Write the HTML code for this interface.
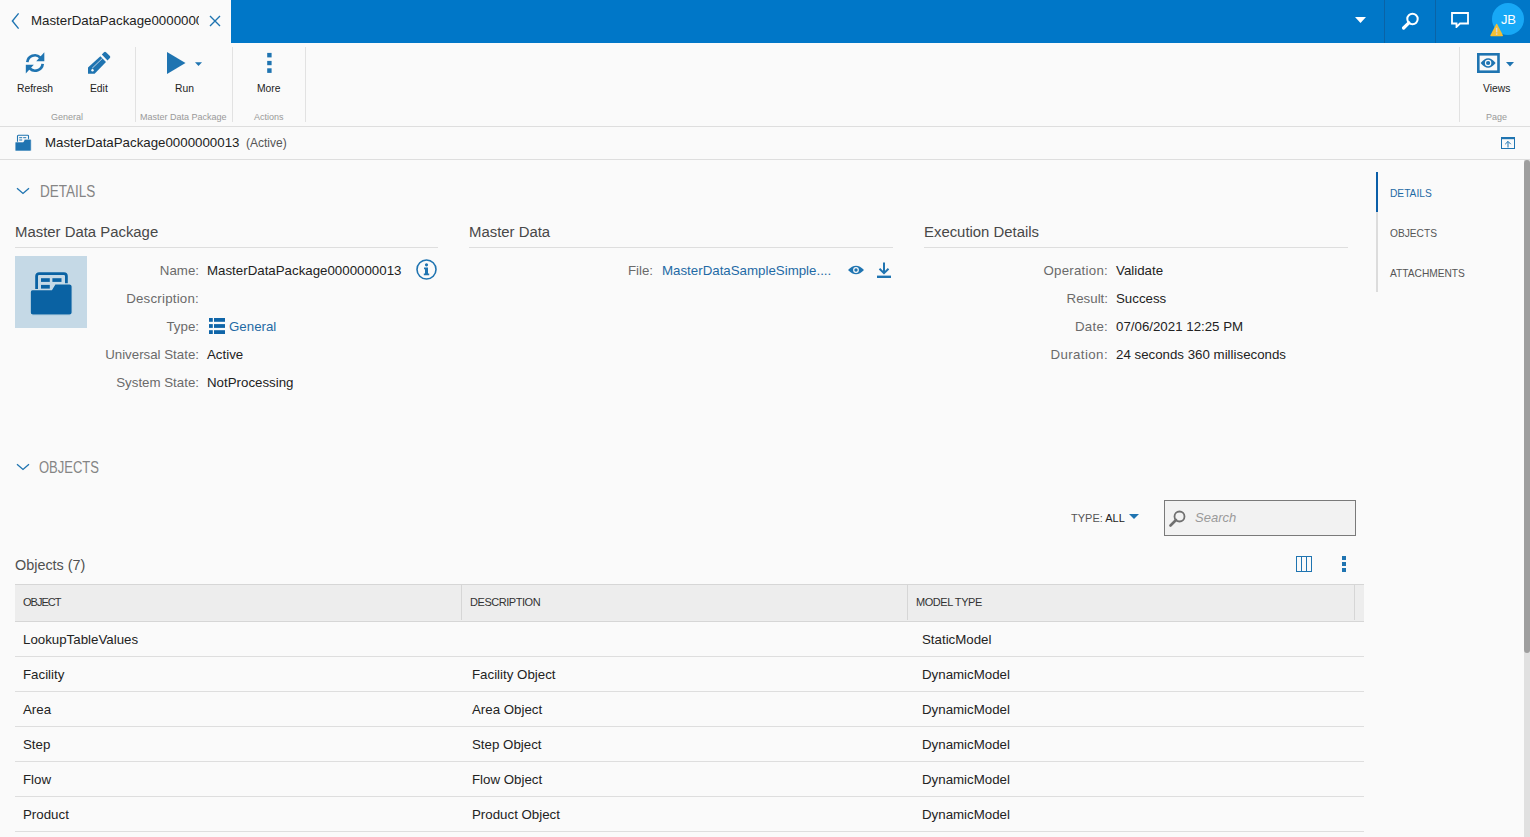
<!DOCTYPE html>
<html><head><meta charset="utf-8">
<style>
*{margin:0;padding:0;box-sizing:border-box}
html,body{width:1530px;height:837px;overflow:hidden;background:#fafafa;font-family:"Liberation Sans",sans-serif;color:#222}
.a{position:absolute;white-space:nowrap}
.topbar{position:absolute;left:231px;top:0;width:1299px;height:43px;background:#0077c8}
.tsep{position:absolute;top:0;width:1px;height:43px;background:#0a63a6}
.rsep{position:absolute;top:47px;width:1px;height:75px;background:#e2e2e2}
.rlab{font-size:10.3px;color:#222;margin-top:1.5px}
.glab{font-size:9px;color:#999;margin-top:1px}
.hline{position:absolute;height:1px;background:#dedede}
.lbl{font-size:13.3px;color:#6a6a6a;text-align:right;margin-top:1px}
.val{font-size:13.3px;color:#222;margin-top:1px}
.sect{font-size:14.9px;color:#484848;margin-top:1.2px}
.big{font-size:15.6px;color:#858585;transform-origin:0 0}
.nav{font-size:10.2px;color:#555;margin-top:1px}
.th{font-size:11px;color:#333;letter-spacing:-0.45px}
.td{font-size:13.3px;color:#222;margin-top:1px}
</style></head><body>

<!-- top bar -->
<div class="topbar"></div>
<div class="tsep" style="left:1384px"></div>
<div class="tsep" style="left:1435px"></div>

<!-- tab -->
<svg class="a" style="left:10px;top:12px" width="12" height="18" viewBox="0 0 12 18"><path d="M8.6 1.4 L2.4 9 L8.6 16.6" fill="none" stroke="#1f74b1" stroke-width="1.4"/></svg>
<div class="a" style="left:31px;top:13px;font-size:13.3px;color:#222;width:168px;overflow:hidden">MasterDataPackage0000000013</div>
<svg class="a" style="left:208.5px;top:15px" width="12" height="12" viewBox="0 0 12 12"><path d="M1 1 L11 11 M11 1 L1 11" fill="none" stroke="#1f74b1" stroke-width="1.4"/></svg>


<!-- ribbon -->
<svg class="a" style="left:25px;top:52px" width="20" height="22" viewBox="0 0 20 22"><g fill="none" stroke="#1f74b1" stroke-width="2.7"><path d="M2.3 10.2 A7.7 7.7 0 0 1 15.2 5.4"/><path d="M17.7 11.8 A7.7 7.7 0 0 1 4.8 16.6"/></g><g fill="#1f74b1"><path d="M19.3 0.2 V9.2 H11.2 Z"/><path d="M0.8 12.8 H8.8 L0.8 21.6 Z"/></g></svg>
<svg class="a" style="left:88px;top:51px" width="23" height="23" viewBox="0 0 23 23"><path fill="#1f74b1" d="M0 16.6 L12.4 5.2 L18 10.9 L6.6 22.8 L0 22.8 Z"/><path fill="#1f74b1" d="M13.8 3.6 L16 1.3 Q17 0.3 18 1.3 L21.9 5.1 Q22.8 6 21.9 7 L19.5 9.4 Z"/><path d="M4.2 17.2 L14.6 7.2" stroke="#e8eef3" stroke-width="0.8"/><circle cx="4.5" cy="19.3" r="1.2" fill="#fafafa"/></svg>
<div class="a rlab" style="left:17px;top:81px">Refresh</div>
<div class="a rlab" style="left:90px;top:81px">Edit</div>
<div class="a glab" style="left:51px;top:111px">General</div>
<div class="rsep" style="left:135px"></div>
<svg class="a" style="left:167px;top:52px" width="19" height="22" viewBox="0 0 19 22"><path fill="#1f74b1" d="M0 0 L18.5 11 L0 22 Z"/></svg>
<svg class="a" style="left:195px;top:62px" width="7" height="5" viewBox="0 0 7 5"><path fill="#1f74b1" d="M0 0.2 H7 L3.5 4 Z"/></svg>
<div class="a rlab" style="left:175px;top:81px">Run</div>
<div class="a glab" style="left:140px;top:111px">Master Data Package</div>
<div class="rsep" style="left:232px"></div>
<svg class="a" style="left:267px;top:52px" width="5" height="22" viewBox="0 0 5 22"><rect x="0.2" y="0.9" width="4.4" height="4.5" fill="#1f74b1"/><rect x="0.2" y="8.9" width="4.4" height="4.3" fill="#1f74b1"/><rect x="0.2" y="16.3" width="4.4" height="4.6" fill="#1f74b1"/></svg>
<div class="a rlab" style="left:257px;top:81px">More</div>
<div class="a glab" style="left:254px;top:111px">Actions</div>
<div class="rsep" style="left:305px"></div>
<div class="rsep" style="left:1459px"></div>
<svg class="a" style="left:1477px;top:53px" width="23" height="20" viewBox="0 0 23 20"><rect x="1.3" y="1.3" width="20.2" height="17.4" fill="none" stroke="#1f74b1" stroke-width="2.6"/><path fill="#1f74b1" d="M3.6 10 Q11.1 0.6 18.6 10 Q11.1 19.4 3.6 10 Z"/><circle cx="11.1" cy="10" r="3.2" fill="#fafafa"/><circle cx="11.1" cy="10" r="2.1" fill="#1f74b1"/></svg>
<svg class="a" style="left:1506px;top:62px" width="8" height="5" viewBox="0 0 8 5"><path fill="#1f74b1" d="M0 0 H8 L4 4.5 Z"/></svg>
<div class="a rlab" style="left:1483px;top:81px">Views</div>
<div class="a glab" style="left:1486px;top:111px">Page</div>
<div class="hline" style="left:0;top:126px;width:1530px"></div>


<!-- title row -->
<svg class="a" style="left:15px;top:134px" width="17" height="18" viewBox="0 0 17 18"><rect x="2.5" y="1.3" width="11" height="8" rx="0.8" fill="none" stroke="#1f74b1" stroke-width="1.1"/><g fill="#1f74b1"><rect x="4.2" y="3.2" width="3" height="1"/><rect x="8.2" y="3.2" width="3" height="1"/><rect x="4.2" y="5.5" width="3" height="1"/></g><path fill="#1f74b1" stroke="#fafafa" stroke-width="0.6" d="M0.8 8 H8.3 L9.6 5.3 H15.3 Q16.2 5.3 16.2 6.2 V16.2 Q16.2 17 15.3 17 H0.9 Q0.1 17 0.1 16.2 V8.9 Q0.1 8 0.8 8 Z"/></svg>
<div class="a" style="left:45px;top:135px;font-size:13.3px;color:#222">MasterDataPackage0000000013</div>
<div class="a" style="left:246px;top:136px;font-size:12px;color:#555">(Active)</div>
<svg class="a" style="left:1501px;top:137px" width="14" height="12" viewBox="0 0 14 12"><rect x="0.5" y="0.5" width="13" height="11" fill="none" stroke="#1f74b1" stroke-width="1"/><rect x="0" y="0" width="14" height="2.2" fill="#1f74b1"/><path d="M7 10.5 V4.5 M4.2 7.2 L7 4.4 L9.8 7.2" fill="none" stroke="#1f74b1" stroke-width="1"/></svg>
<div class="hline" style="left:0;top:159px;width:1530px"></div>

<!-- scrollbar -->
<div class="a" style="left:1524px;top:160px;width:6px;height:677px;background:#e0e0e0"></div>
<div class="a" style="left:1524px;top:160px;width:6px;height:493px;background:#9e9e9e;border-radius:3px"></div>

<!-- details header -->
<svg class="a" style="left:16px;top:187px" width="14" height="8" viewBox="0 0 14 8"><path d="M1 1.2 L7 6.4 L13 1.2" fill="none" stroke="#1f74b1" stroke-width="1.35"/></svg>
<div class="a big" style="left:40px;top:183px;transform:scaleX(0.867)">DETAILS</div>

<!-- col1 -->
<div class="a sect" style="left:15px;top:223px">Master Data Package</div>
<div class="hline" style="left:15px;top:247px;width:423px"></div>
<div class="a" style="left:15px;top:256px;width:72px;height:72px;background:#c5d9e6"></div>
<svg class="a" style="left:30px;top:271.5px" width="43" height="44" viewBox="0 0 43 44"><rect x="6.6" y="1.6" width="29.8" height="20" rx="2.5" fill="none" stroke="#0a62a3" stroke-width="2.8"/><g fill="#0a62a3"><rect x="11" y="6.2" width="8.8" height="3.7"/><rect x="22.4" y="6.2" width="9.1" height="3.7"/><rect x="11" y="12.9" width="8.8" height="3.7"/></g><path fill="#0a62a3" stroke="#c8dbe6" stroke-width="1.2" d="M2.5 17.6 H21.6 L25 11.9 H39.5 Q42.2 11.9 42.2 14.6 V40.5 Q42.2 43.2 39.5 43.2 H2.9 Q0.2 43.2 0.2 40.5 V20.2 Q0.2 17.6 2.5 17.6 Z"/></svg>
<div class="a lbl" style="left:15px;top:262px;width:184px">Name:</div>
<div class="a val" style="left:207px;top:262px">MasterDataPackage0000000013</div>
<svg class="a" style="left:416px;top:259px" width="21" height="21" viewBox="0 0 21 21"><circle cx="10.5" cy="10.5" r="9.5" fill="none" stroke="#1f74b1" stroke-width="1.6"/><circle cx="10.5" cy="5.8" r="1.6" fill="#1f74b1"/><path fill="#1f74b1" d="M8 8.5 H12 V14.5 H13.2 V16.2 H7.8 V14.5 H9 V10.2 H8 Z"/></svg>
<div class="a lbl" style="left:15px;top:290px;width:184px;letter-spacing:0.22px">Description:</div>
<div class="a lbl" style="left:15px;top:318px;width:184px">Type:</div>
<svg class="a" style="left:209px;top:318px" width="16" height="16" viewBox="0 0 16 16"><g fill="#0f65a8"><rect x="0" y="0" width="3.8" height="3.8"/><rect x="5" y="0" width="11" height="3.8"/><rect x="0" y="6.1" width="3.8" height="3.8"/><rect x="5" y="6.1" width="11" height="3.8"/><rect x="0" y="12.2" width="3.8" height="3.8"/><rect x="5" y="12.2" width="11" height="3.8"/></g></svg>
<div class="a val" style="left:229px;top:318px;color:#1f6aa5">General</div>
<div class="a lbl" style="left:15px;top:346px;width:184px">Universal State:</div>
<div class="a val" style="left:207px;top:346px">Active</div>
<div class="a lbl" style="left:15px;top:374px;width:184px">System State:</div>
<div class="a val" style="left:207px;top:374px">NotProcessing</div>

<!-- col2 -->
<div class="a sect" style="left:469px;top:223px">Master Data</div>
<div class="hline" style="left:469px;top:247px;width:424px"></div>
<div class="a lbl" style="left:469px;top:262px;width:184px">File:</div>
<div class="a val" style="left:662px;top:262px;color:#1f6aa5">MasterDataSampleSimple....</div>
<svg class="a" style="left:848px;top:265px" width="16" height="10" viewBox="0 0 16 10"><path fill="#1f74b1" d="M0 5 Q8 -3.5 16 5 Q8 13.5 0 5 Z"/><circle cx="8" cy="5" r="2.9" fill="#fafafa"/><circle cx="8" cy="5" r="1.7" fill="#1f74b1"/></svg>
<svg class="a" style="left:876px;top:262px" width="16" height="16" viewBox="0 0 16 16"><path d="M8 0.5 V11 M3.5 6.8 L8 11.2 L12.5 6.8" fill="none" stroke="#1f74b1" stroke-width="2"/><rect x="1" y="13.6" width="14" height="2.4" fill="#1f74b1"/></svg>

<!-- col3 -->
<div class="a sect" style="left:924px;top:223px">Execution Details</div>
<div class="hline" style="left:924px;top:247px;width:424px"></div>
<div class="a lbl" style="left:924px;top:262px;width:184px;letter-spacing:0.25px">Operation:</div>
<div class="a val" style="left:1116px;top:262px">Validate</div>
<div class="a lbl" style="left:924px;top:290px;width:184px">Result:</div>
<div class="a val" style="left:1116px;top:290px">Success</div>
<div class="a lbl" style="left:924px;top:318px;width:184px;letter-spacing:0.25px">Date:</div>
<div class="a val" style="left:1116px;top:318px">07/06/2021 12:25 PM</div>
<div class="a lbl" style="left:924px;top:346px;width:184px;letter-spacing:0.4px">Duration:</div>
<div class="a val" style="left:1116px;top:346px">24 seconds 360 milliseconds</div>

<!-- right nav -->
<div class="a" style="left:1376px;top:172px;width:2px;height:120px;background:#dcdcdc"></div>
<div class="a" style="left:1376px;top:172px;width:2px;height:40px;background:#0a5ea8"></div>
<div class="a nav" style="left:1390px;top:187px;color:#1f6aa5">DETAILS</div>
<div class="a nav" style="left:1390px;top:227px">OBJECTS</div>
<div class="a nav" style="left:1390px;top:267px">ATTACHMENTS</div>

<!-- objects header -->
<svg class="a" style="left:16px;top:463px" width="14" height="8" viewBox="0 0 14 8"><path d="M1 1.2 L7 6.4 L13 1.2" fill="none" stroke="#1f74b1" stroke-width="1.35"/></svg>
<div class="a big" style="left:39px;top:458.5px;transform:scaleX(0.834)">OBJECTS</div>

<div class="a" style="left:1071px;top:512px;font-size:11px;color:#555">TYPE: <span style="color:#222">ALL</span></div>
<svg class="a" style="left:1129px;top:514px" width="10" height="5" viewBox="0 0 10 5"><path fill="#1f74b1" d="M0 0 H10 L5 5 Z"/></svg>
<div class="a" style="left:1164px;top:500px;width:192px;height:36px;background:#f2f2f2;border:1px solid #7a7a7a"></div>
<svg class="a" style="left:1169px;top:510px" width="17" height="17" viewBox="0 0 17 17"><circle cx="10.5" cy="6.5" r="5" fill="none" stroke="#707070" stroke-width="1.8"/><path d="M7 10 L1.5 15.5" stroke="#707070" stroke-width="2.6" stroke-linecap="round"/></svg>
<div class="a" style="left:1195px;top:510px;font-size:13px;color:#9a9a9a;font-style:italic">Search</div>

<div class="a" style="left:15px;top:557px;font-size:14.4px;color:#505050">Objects (7)</div>
<svg class="a" style="left:1296px;top:556px" width="16" height="16" viewBox="0 0 16 16"><rect x="0.5" y="0.5" width="15" height="15" fill="none" stroke="#1f74b1" stroke-width="1"/><path d="M5.5 0.5 V15.5 M10.5 0.5 V15.5" stroke="#1f74b1" stroke-width="1"/></svg>
<svg class="a" style="left:1342px;top:556px" width="4" height="16" viewBox="0 0 4 16"><rect x="0" y="0" width="4" height="4" fill="#1f74b1"/><rect x="0" y="6" width="4" height="4" fill="#1f74b1"/><rect x="0" y="12" width="4" height="4" fill="#1f74b1"/></svg>

<!-- table -->
<div class="a" style="left:15px;top:584px;width:1349px;height:38px;background:#ededed;border-top:1px solid #d6d6d6;border-bottom:1px solid #d6d6d6"></div>
<div class="a" style="left:461px;top:585px;width:1px;height:35px;background:#d6d6d6"></div>
<div class="a" style="left:907px;top:585px;width:1px;height:35px;background:#d6d6d6"></div>
<div class="a" style="left:1354px;top:585px;width:1px;height:35px;background:#d6d6d6"></div>
<div class="a th" style="left:23px;top:596px;letter-spacing:-1px">OBJECT</div>
<div class="a th" style="left:470px;top:596px">DESCRIPTION</div>
<div class="a th" style="left:916px;top:596px">MODEL TYPE</div>
<div class="a td" style="left:23px;top:631px">LookupTableValues</div><div class="a td" style="left:472px;top:631px"></div><div class="a td" style="left:922px;top:631px">StaticModel</div>
<div class="hline" style="left:15px;top:656px;width:1349px"></div>
<div class="a td" style="left:23px;top:666px">Facility</div><div class="a td" style="left:472px;top:666px">Facility Object</div><div class="a td" style="left:922px;top:666px">DynamicModel</div>
<div class="hline" style="left:15px;top:691px;width:1349px"></div>
<div class="a td" style="left:23px;top:701px">Area</div><div class="a td" style="left:472px;top:701px">Area Object</div><div class="a td" style="left:922px;top:701px">DynamicModel</div>
<div class="hline" style="left:15px;top:726px;width:1349px"></div>
<div class="a td" style="left:23px;top:736px">Step</div><div class="a td" style="left:472px;top:736px">Step Object</div><div class="a td" style="left:922px;top:736px">DynamicModel</div>
<div class="hline" style="left:15px;top:761px;width:1349px"></div>
<div class="a td" style="left:23px;top:771px">Flow</div><div class="a td" style="left:472px;top:771px">Flow Object</div><div class="a td" style="left:922px;top:771px">DynamicModel</div>
<div class="hline" style="left:15px;top:796px;width:1349px"></div>
<div class="a td" style="left:23px;top:806px">Product</div><div class="a td" style="left:472px;top:806px">Product Object</div><div class="a td" style="left:922px;top:806px">DynamicModel</div>
<div class="hline" style="left:15px;top:831px;width:1349px"></div>

<svg class="a" style="left:1355px;top:17px" width="11" height="6" viewBox="0 0 11 6"><path fill="#fff" d="M0 0 H11 L5.5 6 Z"/></svg>
<svg class="a" style="left:1401px;top:12px" width="19" height="18" viewBox="0 0 19 18"><circle cx="11.5" cy="7" r="5.2" fill="none" stroke="#fff" stroke-width="2"/><path d="M7.8 10.8 L2.6 16" stroke="#fff" stroke-width="3.2" stroke-linecap="round"/></svg>
<svg class="a" style="left:1451px;top:12px" width="18" height="16" viewBox="0 0 18 16"><path d="M1 1 H17 V11.5 H9 L5.5 15 V11.5 H1 Z" fill="none" stroke="#fff" stroke-width="1.8" stroke-linejoin="miter"/></svg>
<div class="a" style="left:1492px;top:3px;width:32px;height:32px;border-radius:16px;background:#17a8f6"></div>
<div class="a" style="left:1501px;top:11.5px;font-size:13px;color:#fff;letter-spacing:-0.3px">JB</div>
<svg class="a" style="left:1489px;top:23px" width="15" height="14" viewBox="0 0 15 14"><path fill="#f4bf33" d="M7.2 1 Q7.7 0.4 8.1 1 L13.9 12.3 Q14.2 13.2 13.3 13.2 H2 Q1.1 13.2 1.4 12.3 Z"/><rect x="6.9" y="4.8" width="1.5" height="4.6" fill="#d9d2dc"/><rect x="6.9" y="10.3" width="1.5" height="1.5" fill="#d9d2dc"/></svg>

</body></html>
